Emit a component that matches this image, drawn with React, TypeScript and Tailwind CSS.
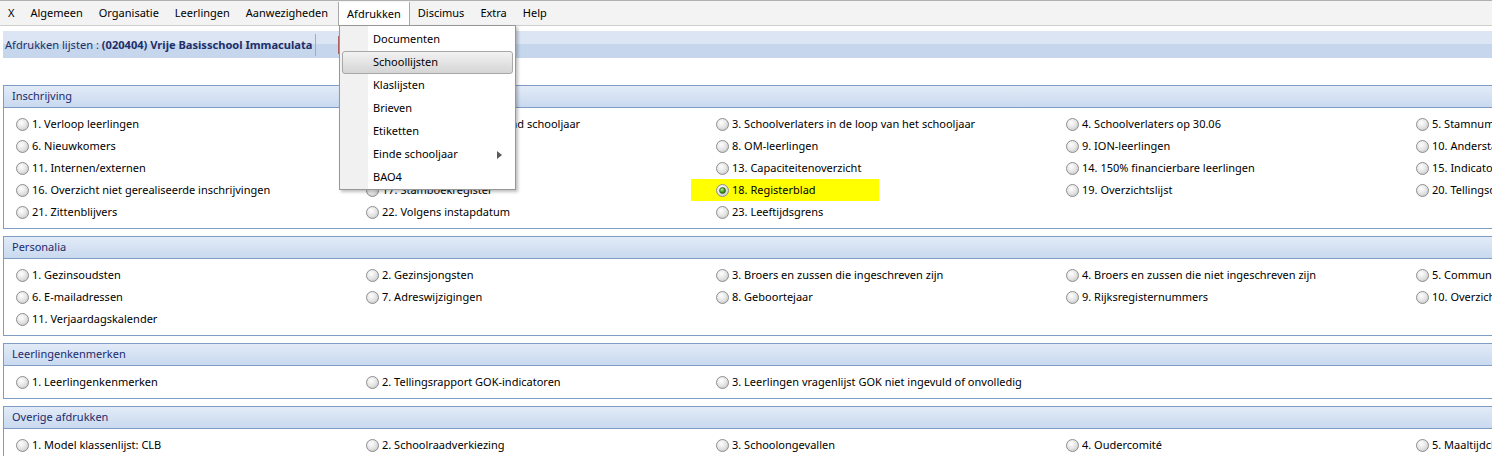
import React from "react";

const font = { fontFamily: '"Noto Sans", "Segoe UI", sans-serif' };

const sections: { title: string; rows: (string | null)[][] }[] = [
  {
    title: "Inschrijving",
    rows: [
      ["1. Verloop leerlingen", "2. Stemming in het volgend schooljaar", "3. Schoolverlaters in de loop van het schooljaar", "4. Schoolverlaters op 30.06", "5. Stamnummers"],
      ["6. Nieuwkomers", "7. Nieuwe leerlingen", "8. OM-leerlingen", "9. ION-leerlingen", "10. Anderstaligen"],
      ["11. Internen/externen", "12. Leerlingen met keuze", "13. Capaciteitenoverzicht", "14. 150% financierbare leerlingen", "15. Indicatoren"],
      ["16. Overzicht niet gerealiseerde inschrijvingen", "17. Stamboekregister", "18. Registerblad", "19. Overzichtslijst", "20. Tellingsoverzicht"],
      ["21. Zittenblijvers", "22. Volgens instapdatum", "23. Leeftijdsgrens", null, null],
    ],
  },
  {
    title: "Personalia",
    rows: [
      ["1. Gezinsoudsten", "2. Gezinsjongsten", "3. Broers en zussen die ingeschreven zijn", "4. Broers en zussen die niet ingeschreven zijn", "5. Communicatie"],
      ["6. E-mailadressen", "7. Adreswijzigingen", "8. Geboortejaar", "9. Rijksregisternummers", "10. Overzicht"],
      ["11. Verjaardagskalender", null, null, null, null],
    ],
  },
  {
    title: "Leerlingenkenmerken",
    rows: [["1. Leerlingenkenmerken", "2. Tellingsrapport GOK-indicatoren", "3. Leerlingen vragenlijst GOK niet ingevuld of onvolledig", null, null]],
  },
  {
    title: "Overige afdrukken",
    rows: [["1. Model klassenlijst: CLB", "2. Schoolraadverkiezing", "3. Schoolongevallen", "4. Oudercomité", "5. Maaltijdcheques"]],
  },
];

function Radio({ checked }: { checked?: boolean }) {
  return (
    <svg width="13" height="13" viewBox="0 0 13 13" className="shrink-0">
      <defs>
        <radialGradient id="rg" cx="40%" cy="35%" r="70%">
          <stop offset="0%" stopColor="#ffffff" />
          <stop offset="60%" stopColor="#e4e4e4" />
          <stop offset="100%" stopColor="#c8c8c8" />
        </radialGradient>
        <radialGradient id="gg" cx="40%" cy="35%" r="70%">
          <stop offset="0%" stopColor="#b8f08a" />
          <stop offset="60%" stopColor="#3a9a1a" />
          <stop offset="100%" stopColor="#1e5e10" />
        </radialGradient>
      </defs>
      <circle cx="6.5" cy="6.5" r="6" fill="url(#rg)" stroke="#8f8f8f" strokeWidth="1" />
      {checked && <circle cx="6.5" cy="6.5" r="3" fill="url(#gg)" stroke="#1d4d10" strokeWidth="0.6" />}
    </svg>
  );
}

function Cell({ label }: { label: string | null }) {
  if (!label) return <div className="w-[350px] shrink-0" />;
  const hl = label === "18. Registerblad";
  return (
    <div className="w-[350px] shrink-0 flex items-center">
      <div className={`flex items-center h-[22px] ${hl ? "bg-[#ffff00] -ml-[25px] pl-[25px] w-[188px]" : ""}`}>
        <Radio checked={hl} />
        <span className="ml-[3px] text-[11px] text-black whitespace-nowrap">{label}</span>
      </div>
    </div>
  );
}

function Section({ title, rows }: { title: string; rows: (string | null)[][] }) {
  return (
    <div className="ml-[3px] w-[1800px] border border-[#7f9dc4]">
      <div className="h-[22px] flex items-center pl-[8px] border-b border-[#7f9dc4] bg-gradient-to-b from-[#e2ebf7] to-[#c9d9ef]">
        <span className="text-[11px] text-[#1c2a6e]">{title}</span>
      </div>
      <div className="pt-[5px] pb-[5px] pl-[12px]">
        {rows.map((r, i) => (
          <div key={i} className="flex h-[22px]">
            {r.map((c, j) => (
              <Cell key={j} label={c} />
            ))}
          </div>
        ))}
      </div>
    </div>
  );
}

const menuItems = ["X", "Algemeen", "Organisatie", "Leerlingen", "Aanwezigheden", "Afdrukken", "Discimus", "Extra", "Help"];

export default function App() {
  return (
    <div className="relative w-[1492px] h-[456px] overflow-hidden bg-white" style={font}>
      {/* menu bar */}
      <div className="h-[26px] flex items-stretch border-t border-[#b0b0b0] border-b border-b-[#cfcfcf] bg-[#f3f3f3] pt-[1px]">
        {menuItems.map((m) => (
          <div
            key={m}
            className={`flex items-center px-[8px] text-[11px] text-black ${m === "Afdrukken" ? "bg-white border-l border-r border-[#a8a8a8] -mb-[1px] px-[7px] ml-[2px]" : ""}`}
          >
            {m}
          </div>
        ))}
      </div>

      {/* header bar */}
      <div className="mt-[5px] ml-[3px] h-[27px] flex items-center relative">
        <div className="absolute inset-0 flex flex-col">
          <div className="h-[13px] bg-[#dbe5f3]" />
          <div className="flex-1 bg-[#c6d7ed]" />
        </div>
        <div className="relative flex items-center h-full pl-[2px] pt-[1px]">
          <span className="text-[11.1px] text-[#1e2f6a] whitespace-nowrap">
            Afdrukken lijsten : <span className="font-bold">(020404) Vrije Basisschool Immaculata</span>
          </span>
          <div className="ml-[3px] w-[1px] h-[22px] bg-[#8fb0dc]" />
          <div className="ml-[22px] w-[3px] h-[18px] bg-[#b06060]" />
        </div>
      </div>

      {/* sections */}
      <div className="mt-[27px] flex flex-col gap-[7px]">
        {sections.map((s) => (
          <Section key={s.title} title={s.title} rows={s.rows} />
        ))}
      </div>

      {/* dropdown menu */}
      <div className="absolute left-[339px] top-[25px] w-[177px] h-[165px] bg-white border border-[#979797] shadow-[2px_2px_3px_rgba(0,0,0,0.25)] flex">
        <div className="w-[28px] bg-[#f1f1f1] shrink-0" />
        <div className="flex-1" />
        <div className="absolute inset-0 pt-[2px] px-[2px]">
          {["Documenten", "Schoollijsten", "Klaslijsten", "Brieven", "Etiketten", "Einde schooljaar", "BAO4"].map((it) => (
            <div
              key={it}
              className={`relative h-[23px] flex items-center pl-[30px] text-[11px] text-black rounded-[3px] ${
                it === "Schoollijsten" ? "bg-gradient-to-b from-[#f2f2f2] to-[#d5d5d5] border border-[#a8a8a8]" : "border border-transparent"
              }`}
            >
              {it}
              {it === "Einde schooljaar" && (
                <svg className="absolute right-[10px]" width="5" height="8" viewBox="0 0 5 8">
                  <path d="M0 0 L5 4 L0 8 Z" fill="#5a5a5a" />
                </svg>
              )}
            </div>
          ))}
        </div>
      </div>
    </div>
  );
}
